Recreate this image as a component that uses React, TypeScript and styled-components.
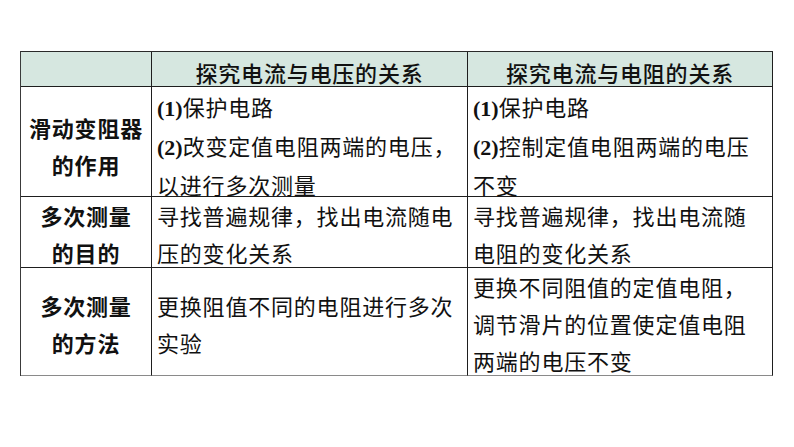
import React from "react";
import styled, { createGlobalStyle } from "styled-components";

const GlobalStyle = createGlobalStyle`
  html, body {
    margin: 0;
    padding: 0;
    background: #fff;
  }
  body {
    font-family: "Noto Sans CJK SC", "Liberation Sans", sans-serif;
  }
`;

const Page = styled.div`
  width: 794px;
  height: 447px;
  padding: 51px 0 0 20px;
  box-sizing: border-box;
`;

const Table = styled.div`
  display: grid;
  grid-template-columns: 131px 316px 305px;
  grid-template-rows: 35px 110px 71px 108px;
  width: 753px;
  border-top: 1px solid #2a2a2a;
  border-left: 1px solid #3a3a3a;
  box-sizing: border-box;
`;

type CellProps = {
  $kind?: "head" | "label" | "body";
  $valign?: "top" | "center";
  $pad?: number;
  $last?: boolean;
};

const Cell = styled.div<CellProps>`
  display: flex;
  flex-direction: column;
  justify-content: ${(p) => (p.$valign === "top" ? "flex-start" : "center")};
  align-items: ${(p) => (p.$kind === "body" ? "flex-start" : "center")};
  border-right: 1px solid #1e1e1e;
  border-bottom: 1px solid ${(p) => (p.$last ? "#8a8a8a" : "#1e1e1e")};
  background: ${(p) => (p.$kind === "head" ? "#d6e7e0" : "#fff")};
  padding: ${(p) =>
    p.$kind === "head" ? "5px 0 0" : `${p.$pad ?? 5}px 5px 0`};
  box-sizing: border-box;
  overflow: visible;
  color: #111;
  font-size: 22px;
  letter-spacing: 0.8px;
  line-height: ${(p) => (p.$kind === "head" ? "36px" : "37px")};
  font-weight: ${(p) =>
    p.$kind === "label" ? 700 : p.$kind === "head" ? 500 : 400};
  text-align: ${(p) => (p.$kind === "body" ? "left" : "center")};
  white-space: nowrap;
`;

const Line = styled.div``;

const Num = styled.span`
  font-family: "Liberation Serif", serif;
  font-weight: 700;
  letter-spacing: 0;
`;

const App: React.FC = () => {
  return (
    <Page>
      <GlobalStyle />
      <Table>
        <Cell $kind="head" />
        <Cell $kind="head">探究电流与电压的关系</Cell>
        <Cell $kind="head">探究电流与电阻的关系</Cell>

        <Cell $kind="label" $pad={8}>
          <Line>滑动变阻器</Line>
          <Line>的作用</Line>
        </Cell>
        <Cell $kind="body" $valign="top" $pad={1}>
          <Line>
            <Num>(1)</Num>保护电路
          </Line>
          <Line>
            <Num>(2)</Num>改变定值电阻两端的电压，
          </Line>
          <Line>以进行多次测量</Line>
        </Cell>
        <Cell $kind="body" $valign="top" $pad={1}>
          <Line>
            <Num>(1)</Num>保护电路
          </Line>
          <Line>
            <Num>(2)</Num>控制定值电阻两端的电压
          </Line>
          <Line>不变</Line>
        </Cell>

        <Cell $kind="label" $pad={4}>
          <Line>多次测量</Line>
          <Line>的目的</Line>
        </Cell>
        <Cell $kind="body" $pad={4}>
          <Line>寻找普遍规律，找出电流随电</Line>
          <Line>压的变化关系</Line>
        </Cell>
        <Cell $kind="body" $pad={4}>
          <Line>寻找普遍规律，找出电流随</Line>
          <Line>电阻的变化关系</Line>
        </Cell>

        <Cell $kind="label" $last>
          <Line>多次测量</Line>
          <Line>的方法</Line>
        </Cell>
        <Cell $kind="body" $last>
          <Line>更换阻值不同的电阻进行多次</Line>
          <Line>实验</Line>
        </Cell>
        <Cell $kind="body" $valign="top" $pad={0} $last>
          <Line>更换不同阻值的定值电阻，</Line>
          <Line>调节滑片的位置使定值电阻</Line>
          <Line>两端的电压不变</Line>
        </Cell>
      </Table>
    </Page>
  );
};

export default App;
